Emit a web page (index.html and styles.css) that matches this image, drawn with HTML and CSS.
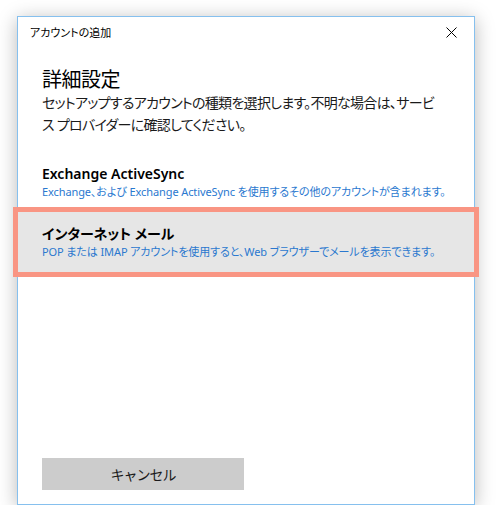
FILE: index.html
```html
<!DOCTYPE html>
<html lang="ja">
<head>
  <meta charset="UTF-8">
  <meta name="viewport" content="width=device-width, initial-scale=1.0">
  <title>アカウントの追加</title>
  <link rel="stylesheet" href="styles.css">
</head>
<body>
  <div class="window">
    <div class="titlebar">
      <span class="title">アカウントの追加</span>
      <svg class="close" width="11" height="11" viewBox="0 0 11 11">
        <path d="M0.5 0.5 L10.5 10.5 M10.5 0.5 L0.5 10.5" stroke="#000" stroke-width="1" fill="none"/>
      </svg>
    </div>
    <div class="intro">
      <h2>詳細設定</h2>
      <p>セットアップするアカウントの種類を選択します。不明な場合は、サービ<br>ス プロバイダーに確認してください。</p>
    </div>
    <ul class="accounts">
      <li class="account">
        <div class="name">Exchange ActiveSync</div>
        <div class="desc">Exchange、および Exchange ActiveSync を使用するその他のアカウントが含まれます。</div>
      </li>
      <li class="account selected">
        <div class="name">インターネット メール</div>
        <div class="desc">POP または IMAP アカウントを使用すると、Web ブラウザーでメールを表示できます。</div>
      </li>
    </ul>
    <div class="footer">
      <button class="cancel">キャンセル</button>
    </div>
  </div>
</body>
</html>
```

FILE: styles.css
```css
body {
  margin: 0;
  background: #fff;
  font-family: "Noto Sans", "Noto Sans CJK JP", sans-serif;
  font-feature-settings: "palt";
  color: #000;
}
.window {
  box-sizing: border-box;
  width: 458px;
  height: 489px;
  margin: 16px 0 0 17px;
  background: #fff;
  border: 1px solid #86c0ee;
  box-shadow: 0 3px 18px rgba(0,0,0,0.28);
  display: flex;
  flex-direction: column;
}
.titlebar {
  height: 30px;
  display: flex;
  align-items: center;
  justify-content: space-between;
  padding: 0 17px 0 12px;
  font-size: 11px;
}
.close {
  display: block;
}
.intro {
  padding: 0 24px;
  margin-top: 21px;
}
.intro h2 {
  margin: 0;
  font-size: 20px;
  font-weight: normal;
  line-height: 24px;
  letter-spacing: -0.5px;
}
.intro p {
  margin: 0;
  font-size: 14px;
  line-height: 22px;
  letter-spacing: -0.7px;
  white-space: nowrap;
  color: #1a1a1a;
}
.accounts {
  list-style: none;
  margin: 16px 0 0;
  padding: 0;
}
.account {
  padding: 12px 24px;
}
.account .name {
  font-size: 14px;
  font-weight: 600;
  line-height: 20px;
}
.account .desc {
  font-size: 11px;
  line-height: 16px;
  letter-spacing: -0.1px;
  white-space: nowrap;
  color: #2a78cf;
}
.account.selected {
  background: #e6e6e6;
  outline: 5px solid #f99583;
}
.footer {
  margin-top: auto;
  padding: 0 0 14px 24px;
}
.cancel {
  width: 202px;
  height: 32px;
  border: none;
  background: #cccccc;
  font-family: inherit;
  font-size: 14px;
  letter-spacing: -1px;
  color: #1a1a1a;
  padding: 0;
}
```
